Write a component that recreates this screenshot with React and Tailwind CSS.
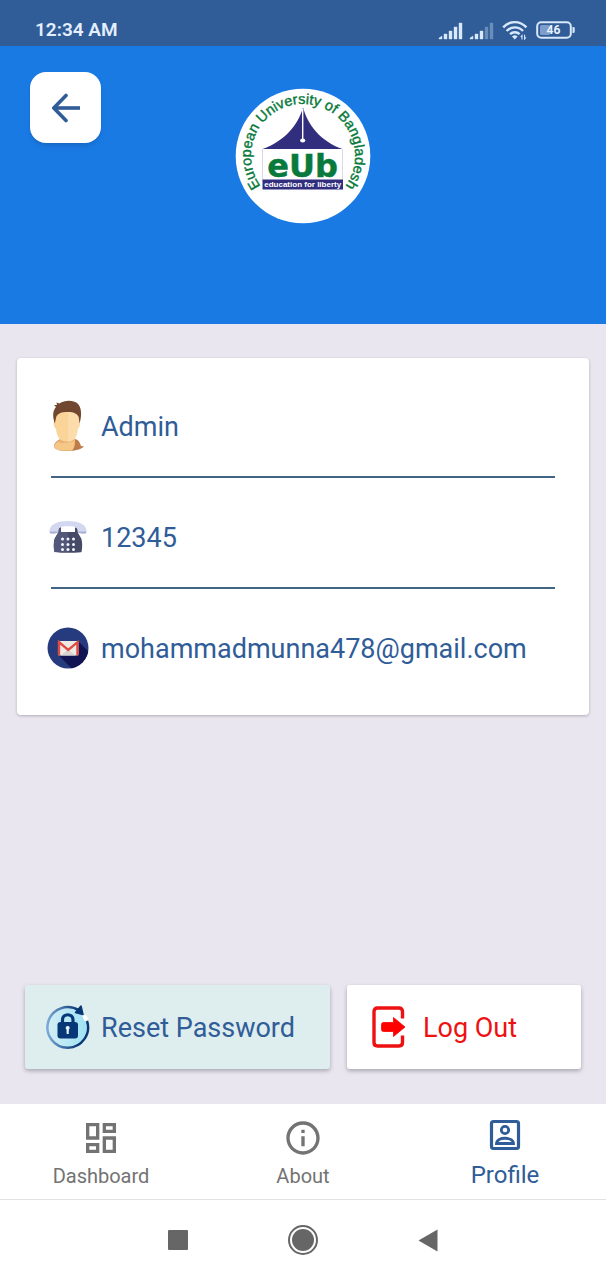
import { MdOutlineDashboard, MdInfoOutline } from "react-icons/md";

function SignalBars({ active }) {
  const bars = ["M1 17 L4 15 V18 H1Z", "M6 13 H9 V18 H6Z", "M11 10 H14 V18 H11Z", "M16 6 H19 V18 H16Z", "M21 2 H24 V18 H21Z"];
  return (
    <svg viewBox="0 0 25 19" className="h-[19px] w-[25px]" aria-hidden="true">
      {bars.map((d, i) => (
        <path key={d} d={d} fill="#d9e8fb" opacity={i < active ? 1 : 0.35} stroke="#d9e8fb" strokeWidth="0.4" strokeLinejoin="round" />
      ))}
    </svg>
  );
}

function WifiIcon() {
  return (
    <svg viewBox="0 0 26 20" className="h-[20px] w-[26px]" fill="none" stroke="#d9e8fb" strokeWidth="2.4" aria-hidden="true">
      <path d="M1.2 7.4 C7.5 0.4 18 0.4 24.4 7.4" />
      <path d="M4.6 11 C9.2 6.2 16.4 6.2 21 11" />
      <path d="M8 14.2 C10.8 11.5 14.9 11.5 17.6 14.2" />
      <path d="M10 16.4 C11.7 14.8 13.9 14.8 15.6 16.4 L12.8 19.4Z" fill="#d9e8fb" stroke="none" />
      <path d="M20 19.5 V15.5 L18.8 17 M22.6 14.8 V19 L23.9 17.5" strokeWidth="1.1" />
    </svg>
  );
}

function BatteryIcon() {
  return (
    <svg viewBox="0 0 40 18" className="h-[18px] w-[40px]" role="img" aria-label="Battery 46 percent">
      <rect x="4" y="4" width="10" height="10" rx="1.5" fill="#7f9dcb" />
      <rect x="1.2" y="1.2" width="33.6" height="15.6" rx="4" fill="none" stroke="#d9e8fb" strokeWidth="2" />
      <path d="M36.5 6 h1 a1.2 1.2 0 0 1 1.2 1.2 v3.6 a1.2 1.2 0 0 1 -1.2 1.2 h-1z" fill="#d9e8fb" />
      <text x="17.5" y="13.4" textAnchor="middle" fontSize="12" fontWeight="700" fill="#eaf3ff" className="font-['Roboto',sans-serif]">46</text>
    </svg>
  );
}

function UniversityLogo() {
  return (
    <svg viewBox="0 0 136 136" className="size-[136px]" role="img" aria-label="European University of Bangladesh">
      <defs>
        <path id="seal-arc" d="M25.6 98 A52 52 0 1 1 110.4 98" />
      </defs>
      <circle cx="68" cy="68" r="67.3" fill="#fff" />
      <text fontSize="14.5" fill="#087a3c" stroke="#087a3c" strokeWidth="0.4" className="font-['Liberation_Sans',sans-serif]">
        <textPath href="#seal-arc" startOffset="50%" textAnchor="middle">European University of Bangladesh</textPath>
      </text>
      <path d="M27.5 61 V94 M107.5 61 V94" stroke="#c9c9dc" strokeWidth="0.7" />
      <path d="M68 19.5 C63 37 50 53 27.5 61 H107.5 C85 53 73 37 68 19.5Z" fill="#322e7e" />
      <path d="M67.7 21 V51" stroke="#fff" strokeWidth="1.4" />
      <ellipse cx="67.7" cy="52.5" rx="2.6" ry="1.9" fill="#fff" />
      <text x="67.5" y="88.5" textAnchor="middle" fontSize="32" fontWeight="700" fill="#087a3c" stroke="#087a3c" strokeWidth="0.5" className="font-['DejaVu_Sans',sans-serif]">eUb</text>
      <rect x="27.5" y="91.5" width="80.5" height="10" fill="#322e7e" />
      <text x="67.7" y="99.3" textAnchor="middle" fontSize="8" fontWeight="700" fill="#fff" className="font-['Liberation_Sans',sans-serif]">education for liberty</text>
    </svg>
  );
}

function PersonIcon() {
  return (
    <svg viewBox="0 0 36 52" className="h-[52px] w-[36px]" aria-hidden="true">
      <path d="M4 47 C4 43 7 40 12 39 H25 C29 40 30 43 31 46 L34 46.5 C30 50 24 51 17 51 C11 51 6 50 4 47Z" fill="#bd7c4a" />
      <path d="M4 47 C5 42 9 41 11 39 L25 39 C25 43 25 48 22 50.5 C14 51.5 7 50.5 4 47Z" fill="#f5c888" />
      <path d="M10 38 H25 L24 42 C20 41 13 45 8 42Z" fill="#e9b272" />
      <path d="M4.5 17 C5 12 10 10 18 10 C26 10 30 13 29 21 C31 22 30 27 27.5 29 C27.5 35 25 41.5 17 41.5 C9 41.5 6.5 35 6 29 C3.5 27 3 22 4.5 21Z" fill="#fbd49a" />
      <path d="M18 11 C26 10 30 13 29 21 C31 22 30 27 27.5 29 C27.5 35 25 41.5 18 41.5Z" fill="#fddcab" />
      <path d="M4.8 23.5 C2.5 17 2.4 11 6 7 L4 5 L7 5 L6.5 2.5 L9.5 3.5 C15 -0.5 25 0 28.5 4.5 C32 9 31.5 17 29.5 23.5 L28.7 17 C27 12.5 21 11.5 17 12 C12 12 7 13 6 18Z" fill="#71472f" />
    </svg>
  );
}

function PhoneIcon() {
  return (
    <svg viewBox="0 0 38 32" className="h-[32px] w-[38px]" aria-hidden="true">
      <path d="M12 6.5 V11 H26 V6.5 H29 V12 L32 17 C33.5 20 33.5 27 32.5 31 C32 32 6 32 5.5 31 C4.5 27 4.5 20 6 17 L9 12 V6.5Z" fill="#474a66" />
      <path d="M6 17 C4.5 20 4.5 27 5.5 31 H19 V11 H12 V6.5 H9 V12Z" fill="#53577a" />
      <path d="M0.5 9 C1.5 3 9 0 19 0 C29 0 36.5 3 37.5 9 C38 12.5 37 12.8 34 12.5 C29 12.3 28.5 12 28.5 9 C28 5.8 25 5.2 19 5.2 C13 5.2 10 5.8 9.5 9 C9.5 12 9 12.3 4 12.5 C1 12.8 0 12.5 0.5 9Z" fill="#d3d8f0" />
      <path d="M1 10.5 H9 C8.5 12 8 12.3 4 12.5 C1 12.8 0.5 12 1 10.5Z M29 10.5 H37 C37.5 12 37 12.8 34 12.5 C30 12.3 29 12 29 10.5Z" fill="#a9b0d2" />
      <g fill="#f3f5ff">
        {[18, 23.5, 28.5].map((y) =>
          [13.5, 19, 24.5].map((x) => <circle key={`${x}-${y}`} cx={x} cy={y} r="1.5" />)
        )}
      </g>
    </svg>
  );
}

function MailIcon() {
  return (
    <svg viewBox="0 0 42 42" className="size-[42px]" aria-hidden="true">
      <defs>
        <clipPath id="mail-disc"><circle cx="21" cy="21" r="20.5" /></clipPath>
      </defs>
      <circle cx="21" cy="21" r="20.5" fill="#263b7d" />
      <path d="M11 27.5 L31 14 L46 29 V46 H29Z" fill="#111450" clipPath="url(#mail-disc)" />
      <rect x="11" y="14" width="20.5" height="14.5" rx="1.5" fill="#eeeae6" />
      <path d="M14 28.5 L21 22.5 L28.5 28.5Z" fill="#d8d2cf" />
      <path d="M12 28.2 V15.2 L21.2 23 L30.5 15.2 V28.2" fill="none" stroke="#dd4b43" strokeWidth="2.4" />
    </svg>
  );
}

function ResetIcon() {
  return (
    <svg viewBox="0 0 44 46" className="h-[46px] w-[44px]" aria-hidden="true">
      <defs>
        <linearGradient id="reset-ring" x1="0" x2="1"><stop offset="0" stopColor="#7ba9d8" /><stop offset="0.75" stopColor="#073777" /></linearGradient>
        <linearGradient id="reset-disc" x1="0" x2="1"><stop offset="0" stopColor="#d3eef5" /><stop offset="1" stopColor="#9ee2f5" /></linearGradient>
      </defs>
      <circle cx="21.5" cy="23.5" r="19" fill="url(#reset-disc)" />
      <path d="M33 6.5 A20.3 20.3 0 1 0 41 17" fill="none" stroke="url(#reset-ring)" strokeWidth="2.5" />
      <path d="M36 11.5 L40 11 L42.5 15 L38.5 17Z" fill="#fff" />
      <path d="M35 2 L37 10.500 L29.500 8.500Z" fill="#073777" stroke="#073777" strokeWidth="1.5" strokeLinejoin="round" />
      <path d="M16.5 19 V16 C16.5 9 27 9 27 16 V19" fill="none" stroke="#073777" strokeWidth="3.2" />
      <rect x="11.5" y="18" width="20.5" height="16.5" rx="3" fill="#073777" />
      <path d="M21.7 22 a2 2 0 0 1 1.2 3.6 L22.7 30 H20.7 L20.5 25.6 A2 2 0 0 1 21.7 22Z" fill="#e5f6fa" />
    </svg>
  );
}

function LogoutIcon() {
  return (
    <svg viewBox="0 0 34 42" className="h-[42px] w-[34px]" aria-hidden="true">
      <path d="M30.5 12.5 V5.5 Q30.5 2 27 2 H5.5 Q2 2 2 5.5 V36.5 Q2 40 5.5 40 H27 Q30.5 40 30.5 36.5 V29.5" fill="none" stroke="#ee1111" strokeWidth="3.4" />
      <path d="M11.5 16.5 H21.5 V11.5 L33 21 L21.5 30.5 V25.5 H11.5 Q9.5 25.5 9.5 23.5 V18.5 Q9.5 16.5 11.5 16.5Z" fill="#ff0000" stroke="#ff0000" strokeWidth="0.8" strokeLinejoin="round" />
    </svg>
  );
}

function ProfileIcon() {
  return (
    <svg viewBox="0 0 40 40" className="size-10" fill="none" stroke="currentColor" aria-hidden="true">
      <rect x="6.5" y="6.5" width="27" height="27" rx="2" strokeWidth="3.2" />
      <circle cx="20" cy="15" r="3.7" strokeWidth="2.8" />
      <path d="M11.5 28.5 C12 21.5 28 21.5 28.5 28.5Z" strokeWidth="2.8" />
    </svg>
  );
}

const contact = [
  { Icon: PersonIcon, text: "Admin" },
  { Icon: PhoneIcon, text: "12345" },
  { Icon: MailIcon, text: "mohammadmunna478@gmail.com" },
];

export default function App() {
  return (
    <div className="flex min-h-screen flex-col bg-[#e9e6f0] font-['Roboto',sans-serif]">
      <div className="flex h-[46px] items-center justify-between bg-[#305c98] pt-[14px] pr-[30px] pl-[35px]">
        <span className="text-[19px] font-semibold text-[#e4effd]">12:34 AM</span>
        <div className="flex items-center gap-[6px]">
          <SignalBars active={5} />
          <SignalBars active={3} />
          <div className="flex items-center gap-2 pl-[2px]">
            <WifiIcon />
            <BatteryIcon />
          </div>
        </div>
      </div>

      <header className="grid h-[278px] grid-cols-3 items-start bg-[#1a7ae4] px-[30px] pt-[26px]">
        <button type="button" aria-label="Back" className="flex size-[71px] items-center justify-center rounded-[16px] bg-white shadow-md">
          <svg viewBox="0 0 30 30" className="size-[30px]" fill="none" stroke="#305c98" strokeWidth="3.6" aria-hidden="true">
            <path d="M29 15 H4" />
            <path d="M15 2.5 L2.8 15 L15 27.5" strokeLinecap="round" strokeLinejoin="round" />
          </svg>
        </button>
        <div className="flex justify-center pt-4">
          <UniversityLogo />
        </div>
      </header>

      <main className="flex grow flex-col">
        <section className="mx-[17px] mt-[34px] rounded-[4px] bg-white px-[34px] pt-[9px] pb-[17px] shadow-[0_1px_3px_rgba(0,0,0,0.25)]">
          <ul className="divide-y-2 divide-[#426584]">
            {contact.map(({ Icon, text }) => (
              <li key={text} className="pt-[33px] pb-6">
                <div className="-ml-1 flex h-[52px] items-center gap-3">
                  <span className="flex w-[42px] shrink-0 justify-center">
                    <Icon />
                  </span>
                  <span className="pt-[2px] text-[27px] leading-8 text-[#305c98]">{text}</span>
                </div>
              </li>
            ))}
          </ul>
        </section>

        <div className="mt-auto grid grid-cols-[305fr_234fr] gap-[17px] px-[25px] pb-[35px]">
          <button type="button" className="flex h-[84px] items-center gap-[11px] rounded-[3px] bg-[#deedee] pl-[21px] text-[27px] text-[#305c98] shadow-[0_2px_4px_rgba(0,0,0,0.28)]">
            <ResetIcon />
            <span className="pt-[2px]">Reset Password</span>
          </button>
          <button type="button" className="flex h-[84px] items-center gap-[17px] rounded-[3px] bg-white pl-[25px] text-[27px] text-[#ee1111] shadow-[0_2px_4px_rgba(0,0,0,0.28)]">
            <LogoutIcon />
            <span className="pt-[2px]">Log Out</span>
          </button>
        </div>
      </main>

      <nav className="grid h-[96px] grid-cols-3 border-b border-[#e2e2e2] bg-white text-[#737373]">
        <a href="#dashboard" className="flex flex-col items-center pt-[14px]">
          <MdOutlineDashboard className="size-10" aria-hidden="true" />
          <span className="mt-[6px] text-[20px] leading-6">Dashboard</span>
        </a>
        <a href="#about" className="flex flex-col items-center pt-[14px]">
          <MdInfoOutline className="size-10" aria-hidden="true" />
          <span className="mt-[6px] text-[20px] leading-6">About</span>
        </a>
        <a href="#profile" aria-current="page" className="flex flex-col items-center pt-[11px] text-[#305c98]">
          <ProfileIcon />
          <span className="mt-[6px] text-[24px] leading-7">Profile</span>
        </a>
      </nav>

      <div className="flex h-[80px] items-center justify-center gap-[95px] bg-white">
        <button type="button" aria-label="Recent apps" className="flex size-[30px] items-center justify-center">
          <span className="size-5 rounded-[1px] bg-[#666666]" />
        </button>
        <button type="button" aria-label="Home" className="flex size-[30px] items-center justify-center rounded-full border-2 border-[#666666]">
          <span className="size-[22px] rounded-full bg-[#666666]" />
        </button>
        <button type="button" aria-label="Back to previous screen" className="flex size-[30px] items-center justify-center">
          <svg viewBox="0 0 20 23" className="h-[23px] w-5" aria-hidden="true">
            <path d="M19.5 0.5 V22.5 L0.5 11.5Z" fill="#666666" />
          </svg>
        </button>
      </div>
    </div>
  );
}
